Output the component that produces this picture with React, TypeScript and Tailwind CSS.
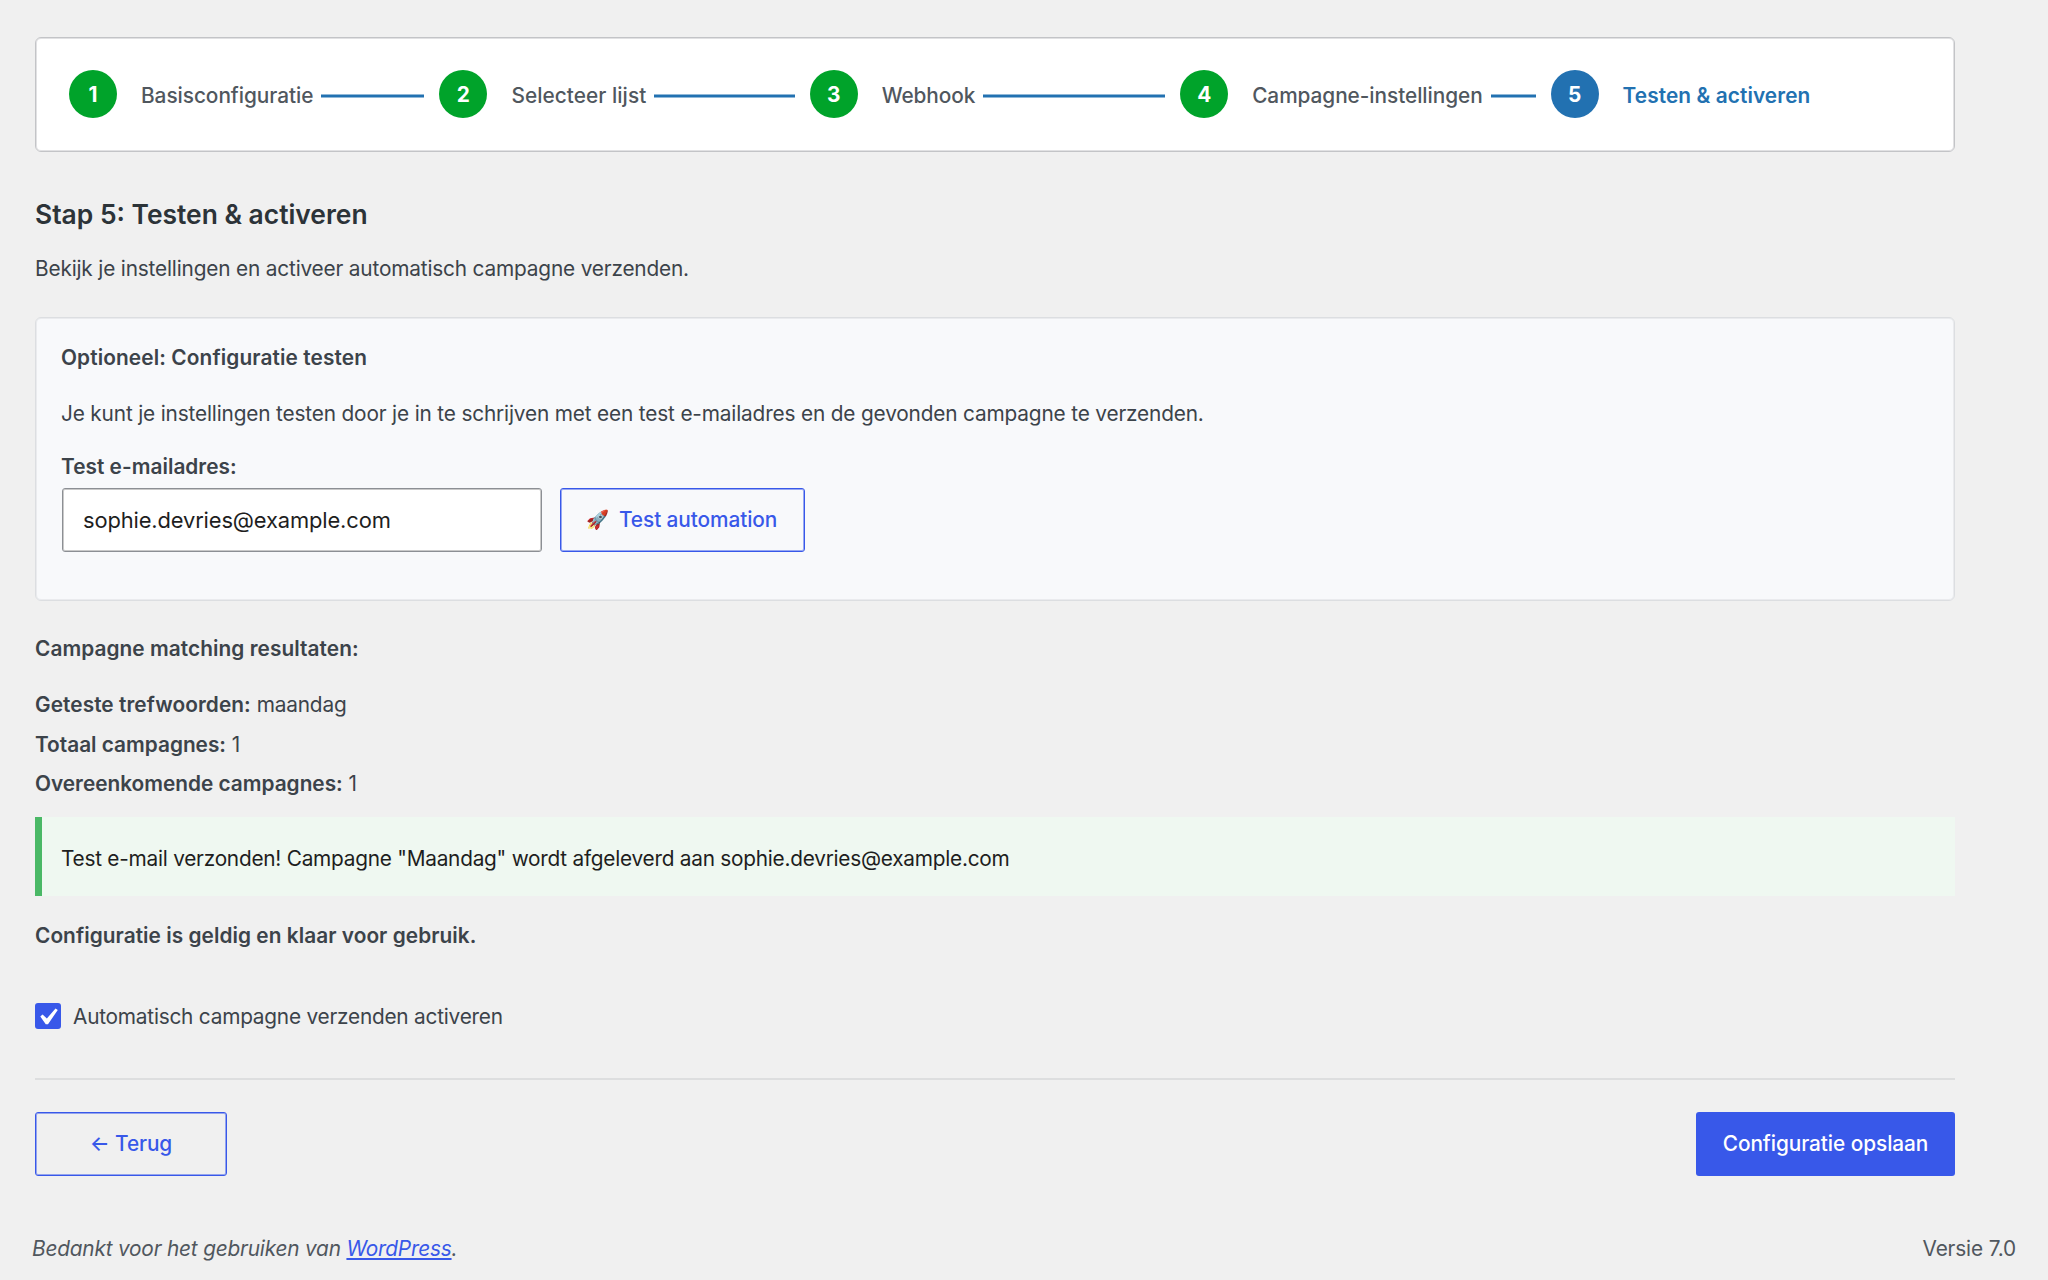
type Step = {
  label: string;
  labelClass: string;
  active?: boolean;
};

const steps: Step[] = [
  { label: "Basisconfiguratie", labelClass: "tracking-[-0.04px]" },
  { label: "Selecteer lijst", labelClass: "tracking-[0.06px]" },
  { label: "Webhook", labelClass: "tracking-[-0.1px]" },
  { label: "Campagne-instellingen", labelClass: "tracking-[-0.05px]" },
  { label: "Testen & activeren", labelClass: "tracking-[0.1px]", active: true },
];

function StepItem({ step, index, last }: { step: Step; index: number; last: boolean }) {
  return (
    <li className="flex w-[370.4px] items-center">
      <span
        className={`flex size-12 shrink-0 items-center justify-center rounded-full pt-[3px] text-[20.8px] font-bold text-white ${
          step.active ? "bg-[#2271b1]" : "bg-[#00a32a]"
        }`}
      >
        {index + 1}
      </span>
      <span
        className={`ml-6 pt-1 whitespace-nowrap ${step.labelClass} ${
          step.active ? "font-semibold text-[#2271b1]" : "font-medium text-[#50575e]"
        }`}
      >
        {step.label}
      </span>
      {!last && (
        <span className="mt-[5px] mr-[15px] ml-2 h-0.5 flex-1 bg-[#2271b1] shadow-[0_1px_0_#2271b180,0_-1px_0_#2271b180]" />
      )}
    </li>
  );
}

function CheckMark() {
  return (
    <svg viewBox="2.62 1.6 15.48 15.48" className="size-[26px]" aria-hidden="true">
      <path d="M14.83 4.89l1.34.94-5.81 8.38H9.02L5.78 9.67l1.34-1.25 2.57 2.4z" fill="#fff" />
    </svg>
  );
}

export default function App() {
  return (
    <div className="flex h-[1280px] w-[2048px] flex-col overflow-hidden bg-[#f0f0f0] pt-[37px] font-['Inter',sans-serif] text-[20.8px] leading-8 text-[#3c434a]">
      <main className="ml-[35px] flex w-[1920px] flex-col">
        <ol className="flex h-[115px] rounded-md border border-[#c3c4c7] bg-white pt-[31px] pl-[33px] shadow-[inset_0_0_0_1px_#c3c4c780]">
          <div className="flex h-[49px] items-center">
            {steps.map((step, i) => (
              <StepItem key={step.label} step={step} index={i} last={i === steps.length - 1} />
            ))}
          </div>
        </ol>

        <h2 className="mt-[42px] h-10 text-[26.4px] leading-10 font-semibold text-[#2c3338]">
          Stap 5: Testen &amp; activeren
        </h2>
        <p className="mt-[19px] tracking-[-0.17px]">
          Bekijk je instellingen en activeer automatisch campagne verzenden.
        </p>

        <section className="mt-8 h-[284px] rounded-md border border-[#dcdee1] bg-[#f8f9fb] px-[25px] pt-6 shadow-[inset_0_0_0_1px_#dcdee180]">
          <h3 className="font-semibold tracking-[0.12px]">Optioneel: Configuratie testen</h3>
          <p className="mt-6 tracking-[-0.16px]">
            Je kunt je instellingen testen door je in te schrijven met een test e-mailadres en de gevonden campagne te
            verzenden.
          </p>
          <label htmlFor="email" className="mt-[21px] block font-semibold tracking-[0.04px]">
            Test e-mailadres:
          </label>
          <div className="mt-[5px] flex gap-[18px] pl-px">
            <input
              id="email"
              type="email"
              defaultValue="sophie.devries@example.com"
              className="h-16 w-[480px] rounded-[3px] border border-[#8c8f94] bg-white px-5 text-[21.9px] tracking-[-0.13px] text-[#1e1e1e] shadow-[inset_0_0_0_1px_#94949480] outline-none"
            />
            <button className="flex h-16 w-[245px] items-center rounded-[3px] border border-[#3858e9] pl-[25px] font-[550] tracking-[-0.08px] text-[#3858e9] shadow-[inset_0_0_0_1px_#3858e980]">
              <span className="-mt-0.5 w-[33px] text-left text-[18.5px]">🚀</span>
              <span className="-mt-px">Test automation</span>
            </button>
          </div>
        </section>

        <h3 className="mt-8 font-semibold tracking-[0.07px]">Campagne matching resultaten:</h3>
        <p className="mt-6">
          <strong className="font-semibold tracking-[0.08px]">Geteste trefwoorden:</strong>{" "}
          <span className="tracking-[-0.17px]">maandag</span>
        </p>
        <p className="mt-2">
          <strong className="font-semibold">Totaal campagnes:</strong> 1
        </p>
        <p className="mt-[7px]">
          <strong className="font-semibold">Overeenkomende campagnes:</strong> 1
        </p>

        <div className="mt-[17px] flex h-[79px] items-center border-l-[7px] border-[#4ab866] bg-[#eff8f1] pt-1 pl-[19px] tracking-[-0.24px] text-[#1e1e1e]">
          Test e-mail verzonden! Campagne "Maandag" wordt afgeleverd aan sophie.devries@example.com
        </div>

        <p className="mt-6 font-semibold tracking-[0.06px]">Configuratie is geldig en klaar voor gebruik.</p>

        <label className="mt-12 flex h-8 items-center">
          <span className="flex size-[26px] items-center justify-center rounded-[3px] bg-[#3858e9]">
            <CheckMark />
          </span>
          <span className="ml-3 pt-px tracking-[-0.22px]">Automatisch campagne verzenden activeren</span>
        </label>

        <hr className="mt-[46px] h-0.5 border-0 bg-[#dddedf]" />

        <div className="mt-8 flex justify-between">
          <button className="h-16 w-48 rounded-[3px] border border-[#3858e9] font-[550] tracking-[-0.1px] text-[#3858e9] shadow-[inset_0_0_0_1px_#3858e980]">
            ← Terug
          </button>
          <button className="h-16 w-[259px] rounded-[3px] bg-[#3858e9] font-[550] tracking-[-0.06px] text-white">
            Configuratie opslaan
          </button>
        </div>
      </main>

      <footer className="mt-[57px] flex justify-between pr-8 pl-8 text-[#50575e]">
        <p className="tracking-[-0.19px] italic">
          Bedankt voor het gebruiken van{" "}
          <a className="text-[#3858e9] underline decoration-[1.6px] underline-offset-2">WordPress</a>.
        </p>
        <p className="tracking-[-0.15px]">Versie 7.0</p>
      </footer>
    </div>
  );
}
